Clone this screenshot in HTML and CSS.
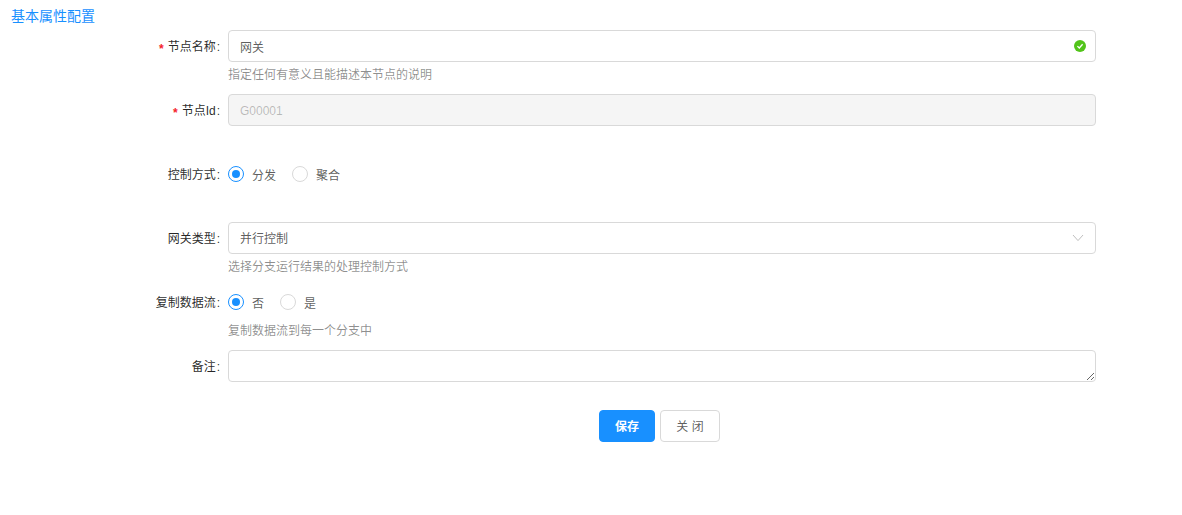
FILE: index.html
```html
<!DOCTYPE html>
<html lang="zh-CN">
<head>
<meta charset="utf-8">
<title>基本属性配置</title>
<link rel="stylesheet" href="styles.css">
</head>
<body>
<div class="title">基本属性配置</div>
<form class="form">
  <div class="row">
    <label class="label required">节点名称</label>
    <div class="control">
      <div class="field">
        <input class="input" type="text" value="网关">
        <svg class="suffix" width="12" height="12" viewBox="0 0 12 12"><circle cx="6" cy="6" r="6" fill="#52c41a"/><path d="M3.4 6.1 5.3 8 8.6 4.3" fill="none" stroke="#fff" stroke-width="1.3"/></svg>
      </div>
      <div class="help">指定任何有意义且能描述本节点的说明</div>
    </div>
  </div>
  <div class="row">
    <label class="label required">节点Id</label>
    <div class="control">
      <input class="input disabled" type="text" value="G00001" disabled>
      <div class="help"></div>
    </div>
  </div>
  <div class="row">
    <label class="label">控制方式</label>
    <div class="control">
      <div class="radios">
        <span class="radio checked"></span><span class="radio-text">分发</span>
        <span class="radio"></span><span class="radio-text">聚合</span>
      </div>
      <div class="help"></div>
    </div>
  </div>
  <div class="row">
    <label class="label">网关类型</label>
    <div class="control">
      <div class="field select">
        <span>并行控制</span>
        <svg class="suffix chevron" width="12" height="12" viewBox="0 0 12 12"><path d="M1 3 6 8.6 11 3" fill="none" stroke="#bfbfbf" stroke-width="1"/></svg>
      </div>
      <div class="help">选择分支运行结果的处理控制方式</div>
    </div>
  </div>
  <div class="row">
    <label class="label">复制数据流</label>
    <div class="control">
      <div class="radios">
        <span class="radio checked"></span><span class="radio-text">否</span>
        <span class="radio"></span><span class="radio-text">是</span>
      </div>
      <div class="help">复制数据流到每一个分支中</div>
    </div>
  </div>
  <div class="row row-last">
    <label class="label">备注</label>
    <div class="control">
      <textarea class="input textarea"></textarea>
    </div>
  </div>
  <div class="actions">
    <button class="btn primary" type="button">保存</button>
    <button class="btn" type="button">关 闭</button>
  </div>
</form>
</body>
</html>
```
FILE: styles.css
```css
* { box-sizing: border-box; }
html, body { margin: 0; padding: 0; background: #fff; }
body {
  font-family: "Liberation Sans", "Noto Sans CJK SC", sans-serif;
  font-size: 12px;
  color: rgba(0, 0, 0, 0.65);
}
.title {
  height: 30px;
  padding: 6px 0 0 11px;
  font-size: 14px;
  line-height: 20px;
  color: #1890ff;
}
.form { width: 1096px; }
.row {
  display: grid;
  grid-template-columns: 228px 1fr;
  margin-bottom: 8px;
}
.row-last { margin-bottom: 28px; }
.label {
  height: 32px;
  line-height: 34px;
  text-align: right;
  padding-right: 8px;
  color: rgba(0, 0, 0, 0.85);
}
.label::after { content: ":"; margin-left: 1px; }
.required::before {
  content: "*";
  display: inline-block;
  width: 7px;
  margin-right: 3px;
  color: #f5222d;
  font-family: "Liberation Mono", monospace;
  font-size: 12px;
  font-weight: 700;
  line-height: 1;
  vertical-align: -2px;
}
.control { min-width: 0; }
.field { position: relative; }
.input, .select {
  display: block;
  width: 100%;
  height: 32px;
  padding: 4px 11px;
  border: 1px solid #d9d9d9;
  border-radius: 4px;
  background: #fff;
  font: inherit;
  line-height: 22px;
  color: rgba(0, 0, 0, 0.65);
  outline: none;
}
.select { padding-top: 5px; padding-bottom: 3px; }
.disabled {
  padding-top: 5px;
  padding-bottom: 3px;
  background: #f5f5f5;
  color: rgba(0, 0, 0, 0.25);
}
.textarea { resize: vertical; min-height: 32px; }
.suffix { position: absolute; right: 10px; top: 10px; }
.chevron { right: 11px; top: 9px; }
.help {
  height: 24px;
  line-height: 26px;
  color: rgba(0, 0, 0, 0.45);
}
.radios { display: flex; align-items: center; height: 32px; }
.radio {
  position: relative;
  width: 16px;
  height: 16px;
  border: 1px solid #d9d9d9;
  border-radius: 50%;
  background: #fff;
  flex: none;
}
.radio.checked { border-color: #1890ff; }
.radio.checked::after {
  content: "";
  position: absolute;
  left: 3px;
  top: 3px;
  width: 8px;
  height: 8px;
  border-radius: 50%;
  background: #1890ff;
}
.radio-text { padding: 0 8px; margin-right: 8px; }
.actions {
  display: flex;
  gap: 5px;
  margin-left: 599px;
}
.btn {
  width: 60px;
  height: 32px;
  padding: 0 0 2px;
  border: 1px solid #d9d9d9;
  border-radius: 4px;
  background: #fff;
  font: inherit;
  color: rgba(0, 0, 0, 0.65);
}
.primary {
  width: 56px;
  border-color: #1890ff;
  background: #1890ff;
  color: #fff;
  font-weight: 700;
}
```
